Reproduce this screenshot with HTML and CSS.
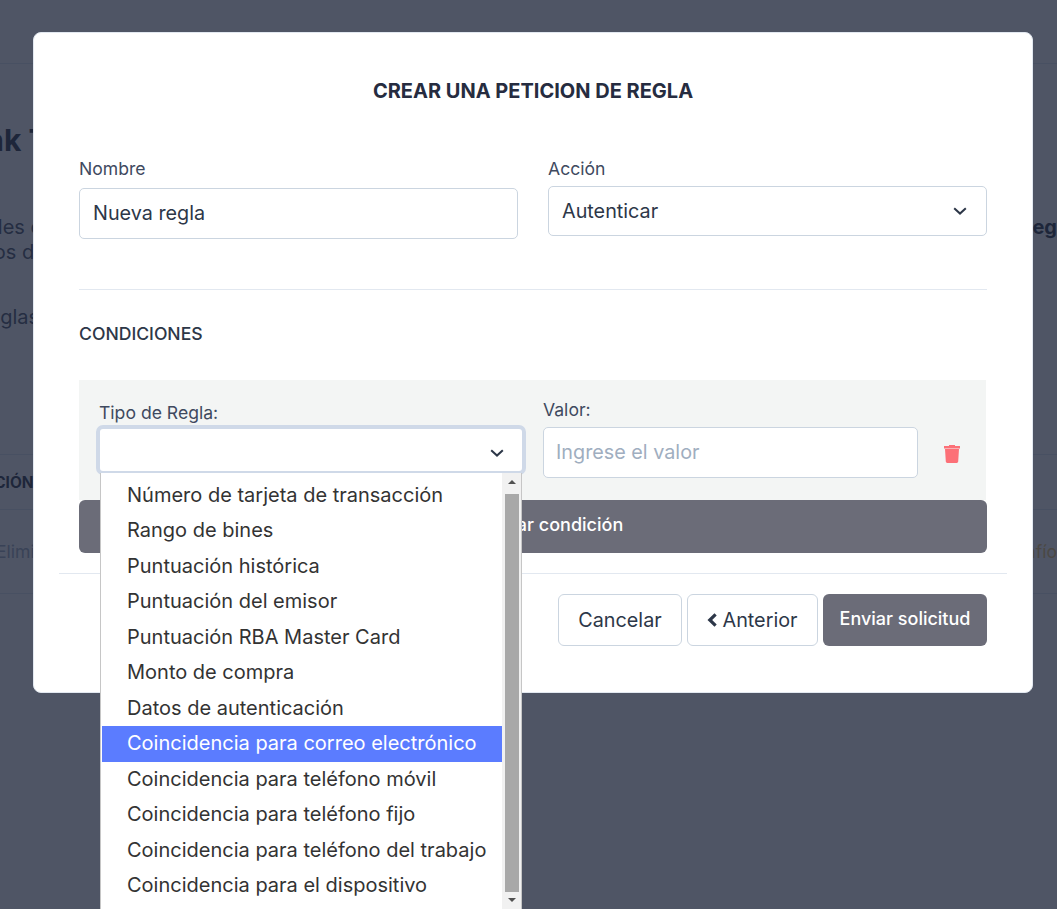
FILE: index.html
```html
<!DOCTYPE html>
<html lang="es">
<head>
<meta charset="utf-8">
<title>Crear una peticion de regla</title>
<link rel="stylesheet" href="styles.css">
</head>
<body>
<div class="page">
  <div class="bg">
    <div class="bg-head"></div>
    <div class="bg-title"><span>Bank T</span></div>
    <div class="bg-text">
      <div class="bg-line"><span class="bg-l1">Detalles c</span><span class="bg-r1">Reg</span></div>
      <div class="bg-line"><span class="bg-l2">datos d</span></div>
    </div>
    <div class="bg-rules"><span>Reglas</span></div>
    <div class="bg-table">
      <div class="bg-row bg-th"><span>ACCIÓN</span></div>
      <div class="bg-row bg-td"><span class="bg-elim">Elimi</span><span class="bg-warn">Desafío</span></div>
    </div>
  </div>
  <div class="overlay"></div>

  <div class="modal">
    <h2 class="title">CREAR UNA PETICION DE REGLA</h2>
    <div class="top-grid">
      <div class="field">
        <label class="label">Nombre</label>
        <input class="input input-name" type="text" value="Nueva regla">
      </div>
      <div class="field">
        <label class="label">Acción</label>
        <div class="select select-action">
          <span>Autenticar</span>
          <svg class="chev" width="14" height="8" viewBox="0 0 14 8"><path d="M1.2 1.2 7 6.6l5.8-5.4" fill="none" stroke="#2d3748" stroke-width="2"/></svg>
        </div>
      </div>
    </div>
    <hr class="rule">
    <h3 class="section">CONDICIONES</h3>
    <div class="panel">
      <div class="col-type">
        <label class="label">Tipo de Regla:</label>
        <div class="select select-type">
          <svg class="chev" width="14" height="8" viewBox="0 0 14 8"><path d="M1.2 1.2 7 6.6l5.8-5.4" fill="none" stroke="#2d3748" stroke-width="2"/></svg>
        </div>
      </div>
      <div class="col-value">
        <label class="label">Valor:</label>
        <input class="input input-value" type="text" placeholder="Ingrese el valor">
      </div>
      <svg class="trash" width="16" height="18" viewBox="0 0 16 18"><path d="M5 0h6v1h5v2.6H0V1h5ZM1 4h14l-.8 12.6c-.1.8-.7 1.4-1.5 1.4H3.3c-.8 0-1.4-.6-1.5-1.4L1 4Z" fill="#fc7077"/></svg>
    </div>
    <button class="btn-add" type="button">Agregar condición</button>
    <div class="footer">
      <button class="btn btn-outline btn-cancel" type="button">Cancelar</button>
      <button class="btn btn-outline btn-prev" type="button">
        <svg width="10" height="14" viewBox="0 0 10 14"><path d="M8.6 1.4 2.8 7l5.8 5.6" fill="none" stroke="#2d3748" stroke-width="3.2"/></svg>
        <span>Anterior</span>
      </button>
      <button class="btn btn-solid" type="button">Enviar solicitud</button>
    </div>
  </div>

  <div class="dropdown">
    <ul class="options">
      <li>Número de tarjeta de transacción</li>
      <li>Rango de bines</li>
      <li>Puntuación histórica</li>
      <li>Puntuación del emisor</li>
      <li>Puntuación RBA Master Card</li>
      <li>Monto de compra</li>
      <li>Datos de autenticación</li>
      <li class="selected">Coincidencia para correo electrónico</li>
      <li>Coincidencia para teléfono móvil</li>
      <li>Coincidencia para teléfono fijo</li>
      <li>Coincidencia para teléfono del trabajo</li>
      <li>Coincidencia para el dispositivo</li>
    </ul>
    <div class="scrollbar">
      <span class="arrow arrow-up"></span>
      <span class="thumb"></span>
      <span class="arrow arrow-down"></span>
    </div>
  </div>
</div>
</body>
</html>
```
FILE: styles.css
```css
* { box-sizing: border-box; }
html, body { margin: 0; padding: 0; }
body { font-family: Inter, "Liberation Sans", sans-serif; color: #2d3748; background: #515767; }

.page { position: relative; width: 1057px; height: 909px; overflow: hidden; background: #fff; }

/* Dimmed page behind the modal */
.bg { height: 100%; font-size: 20px; color: #2d3748; }
.bg-head { height: 64px; border-bottom: 1px solid #e2e8f0; }
.bg-title { height: 46px; margin-top: 53px; margin-left: -52px; font-size: 30px; font-weight: 700; line-height: 46px; white-space: nowrap; }
.bg-text { margin-top: 52px; color: #4a5568; }
.bg-line { display: flex; justify-content: space-between; height: 25px; line-height: 25px; white-space: nowrap; }
.bg-l1 { margin-left: -51px; }
.bg-l2 { margin-left: -36px; }
.bg-r1 { font-weight: 700; color: #2d3748; }
.bg-rules { margin-top: 40px; margin-left: -24px; line-height: 25px; color: #4a5568; white-space: nowrap; }
.bg-table { margin-top: 124px; }
.bg-row { display: flex; align-items: center; justify-content: space-between; white-space: nowrap; border-top: 1px solid #e2e8f0; }
.bg-th { height: 55px; font-size: 15.4px; font-weight: 700; color: #2d3748; }
.bg-th span { margin-left: -28px; }
.bg-td { height: 85px; font-size: 17.6px; border-bottom: 1px solid #e2e8f0; }
.bg-elim { margin-left: -4px; color: #a0aec0; }
.bg-warn { color: #eec770; }

.overlay { position: absolute; inset: 0; background: rgba(26, 34, 55, 0.77); }

/* Modal */
.modal {
  position: absolute; left: 33px; top: 32px;
  width: 1000px; height: 661px;
  padding: 0 45px;
  background: #fff;
  border: 1px solid #e2e8f0;
  border-radius: 8px;
}
.title { margin: 46px 0 0; height: 25px; font-size: 20px; line-height: 25px; font-weight: 700; text-align: center; color: #262c40; }
.top-grid { display: grid; grid-template-columns: 439px 439px; column-gap: 30px; margin-top: 53px; }
.field { display: flex; flex-direction: column; }
.label { display: block; font-size: 17.6px; line-height: 24px; color: #3f4a5f; }
.input {
  display: block; width: 100%;
  padding: 0 13px 2px;
  font: 400 19.8px Inter, "Liberation Sans", sans-serif;
  color: #2d3748;
  background: #fff;
  border: 1px solid #cbd5e0;
  border-radius: 5px;
  outline: none;
}
.input::placeholder { color: #a0aec0; opacity: 1; }
.input-name { height: 51px; margin-top: 7px; }
.select {
  display: flex; align-items: center; justify-content: space-between;
  background: #fff; font-size: 19.8px; color: #2d3748;
  border: 1px solid #cbd5e0; border-radius: 5px;
}
.select-action { height: 50px; margin-top: 5px; padding: 0 19px 0 13px; }
.rule { height: 1px; margin: 50px 0 0; border: 0; background: #e2e8f0; }
.section { margin: 33px 0 0; font-size: 17.6px; line-height: 22px; font-weight: 450; color: #2d3748; }

.panel {
  position: relative;
  display: flex; align-items: flex-start;
  width: 907px; height: 120px; margin-top: 35px; padding: 21px 0 0 17px;
  background: #f3f5f4;
}
.col-type { width: 430px; }
.col-type .label { padding-left: 3px; }
.select-type {
  justify-content: flex-end; height: 50px;
  padding: 5px 18px 0 0;
  border: 4px solid #cfd9e8; border-radius: 7px;
}
.col-value { width: 375px; margin-left: 17px; margin-top: -3px; }
.input-value { height: 51px; margin-top: 5px; padding: 0 12px 2px; }
.trash { margin-left: 26px; margin-top: 44px; flex: none; }

.btn-add {
  display: block; width: 908px; height: 53px;
  font: 500 18px Inter, "Liberation Sans", sans-serif; color: #fff;
  background: #6b6c78; border: 0; border-radius: 6px;
  padding: 0 0 4px 22px;
}
.footer {
  display: flex; justify-content: flex-end; gap: 5px;
  margin: 20px -20px 0; padding: 20px 20px 0;
  border-top: 1px solid #e2e8f0;
}
.btn { height: 52px; font: 400 19.8px Inter, "Liberation Sans", sans-serif; border-radius: 6px; cursor: pointer; }
.btn-outline { display: flex; align-items: center; justify-content: center; background: #fff; color: #2d3748; border: 1px solid #cbd5e0; }
.btn-cancel { width: 124px; }
.btn-prev { width: 131px; gap: 5px; }
.btn-solid { width: 164px; padding: 0 0 3px; font-size: 18px; font-weight: 500; color: #fff; background: #6b6c78; border: 0; }

/* Open select popup */
.dropdown {
  position: absolute; left: 100px; top: 473px;
  display: flex;
  width: 422px; height: 440px;
  background: #fff;
  border: 1px solid #c6c6c6; border-top: 0;
  border-radius: 0 0 4px 4px;
}
.options { flex: 1; margin: 0; padding: 4.9px 0 0 1px; list-style: none; font-size: 20px; color: #333; }
.options li { height: 35.5px; line-height: 35.5px; padding-left: 25px; white-space: nowrap; }
.options li.selected { background: #5b7cff; color: #fff; }
.scrollbar { flex: none; display: flex; flex-direction: column; align-items: center; width: 19px; background: #f1f1f1; }
.arrow { display: block; width: 0; height: 0; border-left: 4.5px solid transparent; border-right: 4.5px solid transparent; flex: none; }
.arrow-up { margin-top: 7px; border-bottom: 4.5px solid #505050; }
.thumb { display: block; width: 14px; height: 398px; margin-top: 9.5px; background: #a8a8a8; flex: none; }
.arrow-down { margin-top: 6px; border-top: 4.5px solid #505050; }
```
